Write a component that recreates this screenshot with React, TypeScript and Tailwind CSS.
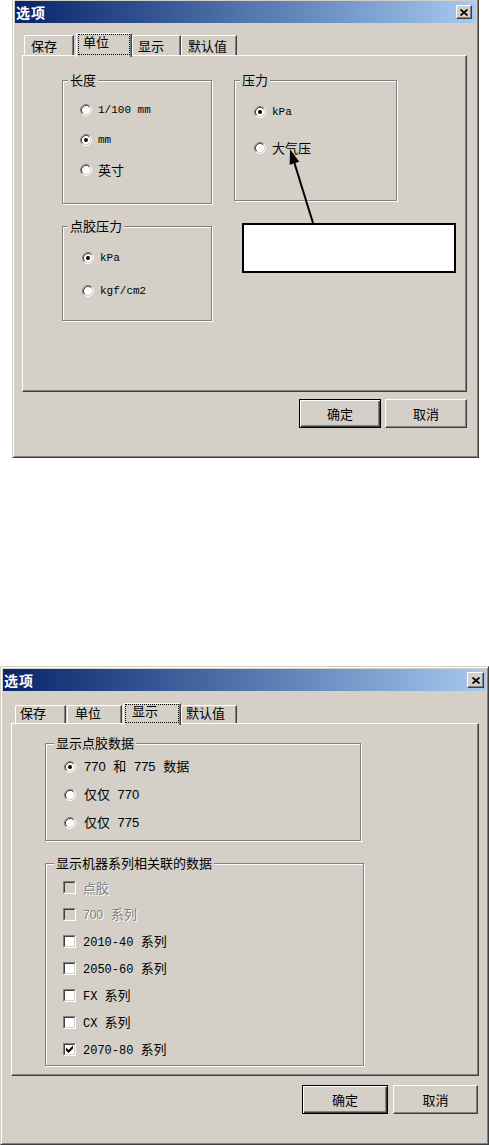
import type { FC, ReactNode } from 'react';

const face = 'bg-[#d4d0c8]';
const cjk = "font-['Noto_Sans_CJK_SC',sans-serif]";
const mono = "font-['Liberation_Mono','Noto_Sans_CJK_SC',monospace]";
const sans = "font-['Liberation_Sans','Noto_Sans_CJK_SC',sans-serif]";
const raised =
  'border border-t-white border-l-white border-r-[#404040] border-b-[#404040] shadow-[inset_-1px_-1px_0_#808080]';
const frame =
  'bg-[#d4d0c8] border border-t-[#d4d0c8] border-l-[#d4d0c8] border-r-[#404040] border-b-[#404040] shadow-[inset_1px_1px_0_#fff,inset_-1px_-1px_0_#808080] p-[2px]';
const greyed = 'text-[#808080] [text-shadow:1px_1px_0_#fff]';

const Radio: FC<{ on?: boolean }> = ({ on }) => (
  <svg width="12" height="12" viewBox="0 0 12 12" className="shrink-0">
    <circle cx="6" cy="6" r="4.5" fill="#fff" />
    <path d="M2.11 9.89A5.5 5.5 0 0 1 9.89 2.11" fill="none" stroke="#808080" />
    <path d="M9.89 2.11A5.5 5.5 0 0 1 2.11 9.89" fill="none" stroke="#fff" />
    <path d="M2.82 9.18A4.5 4.5 0 0 1 9.18 2.82" fill="none" stroke="#404040" />
    <path d="M9.18 2.82A4.5 4.5 0 0 1 2.82 9.18" fill="none" stroke="#d4d0c8" />
    {on && <circle cx="6" cy="6" r="2" fill="#000" />}
  </svg>
);

const Check: FC<{ on?: boolean; off?: boolean }> = ({ on, off }) => (
  <div className="w-[13px] h-[13px] shrink-0 border border-t-[#808080] border-l-[#808080] border-r-white border-b-white">
    <div
      className={`w-full h-full border border-t-[#404040] border-l-[#404040] border-r-[#d4d0c8] border-b-[#d4d0c8] ${
        off ? 'bg-[#d4d0c8]' : 'bg-white'
      }`}
    >
      {on && (
        <svg width="9" height="9" viewBox="0 0 9 9">
          <path d="M1 2.5 3.5 5 8 0.5 8 3.5 3.5 8 1 5.5Z" fill="#000" />
        </svg>
      )}
    </div>
  </div>
);

const Group: FC<{ label: string; cls: string; lbl: string; children: ReactNode }> = ({
  label,
  cls,
  lbl,
  children,
}) => (
  <div className={`relative shrink-0 border border-[#808080] shadow-[inset_1px_1px_0_#fff,1px_1px_0_#fff] ${cls}`}>
    <span className={`absolute -top-[9px] ${lbl} ${face} px-[2px] whitespace-nowrap`}>{label}</span>
    {children}
  </div>
);

const Tab: FC<{ label: string; cls: string; text: string; active?: boolean }> = ({ label, cls, text, active }) => (
  <div
    className={`relative shrink-0 border-t border-l border-r border-t-white border-l-white border-r-[#404040] rounded-tl-[2px] shadow-[inset_-1px_0_0_#808080] ${face} ${cls} ${
      active ? 'z-10 -mb-[2px]' : ''
    }`}
  >
    {active && <div className="absolute left-[1px] right-[1px] top-0 bottom-[2px] border border-dotted border-black" />}
    <div className={`whitespace-nowrap ${text}`}>{label}</div>
  </div>
);

const Btn: FC<{ label: string; cls: string; def?: boolean }> = ({ label, cls, def }) => (
  <div
    className={`flex items-center justify-center ${face} ${cls} ${
      def
        ? 'border border-black shadow-[inset_1px_1px_0_#fff,inset_-1px_-1px_0_#404040,inset_-2px_-2px_0_#808080]'
        : raised
    }`}
  >
    {label}
  </div>
);

const TitleBar: FC<{ close: string; pr: string }> = ({ close, pr }) => (
  <div className={`flex h-[22px] items-center justify-between bg-linear-to-r from-[#0a246a] to-[#a6caf0] pl-[1px] ${pr}`}>
    <span className="text-[14px] font-bold text-white leading-[16px] tracking-[1px]">选项</span>
    <div className={`flex items-center justify-center ${face} ${raised} ${close}`}>
      <svg width="8" height="7" viewBox="0 0 8 7">
        <path d="M0.5 0.5 7.5 6.5M7.5 0.5 0.5 6.5" stroke="#000" strokeWidth="1.7" />
      </svg>
    </div>
  </div>
);

const panel =
  'border border-t-white border-l-white border-r-[#404040] border-b-[#404040] shadow-[inset_-1px_-1px_0_#808080]';

export default function App() {
  return (
    <div className={`relative w-[489px] h-[1145px] overflow-hidden bg-white text-[13px] leading-[16px] text-black ${cjk}`}>
      {/* 单位 */}
      <div className={`ml-[12px] -mt-[2px] w-[467px] h-[460px] ${frame}`}>
        <TitleBar close="w-[16px] h-[14px]" pr="pr-[4px]" />
        <div className="ml-[7px] mt-[10px] flex h-[22px] items-end">
          <Tab label="保存" cls="ml-[2px] w-[50px] h-[20px]" text="pl-[6px] pt-[2px]" />
          <Tab label="单位" cls="ml-[2px] w-[56px] h-[24px]" text="pl-[6px]" active />
          <Tab label="显示" cls="w-[49px] h-[20px]" text="pl-[5px] pt-[2px]" />
          <Tab label="默认值" cls="w-[56px] h-[20px]" text="pl-[6px] pt-[2px]" />
        </div>
        <div className={`ml-[7px] w-[445px] h-[337px] ${panel}`}>
          <div className="flex gap-[22px] pl-[39px] pt-[24px]">
            <div className="flex flex-col gap-[22px]">
              <Group label="长度" cls="w-[150px] h-[124px] pl-[17px] pt-[14px]" lbl="left-[5px]">
                <div className="flex h-[30px] items-center gap-[6px]">
                  <Radio />
                  <span className={`${mono} text-[11px]`}>1/100 mm</span>
                </div>
                <div className="flex h-[30px] items-center gap-[6px]">
                  <Radio on />
                  <span className={`${mono} text-[11px]`}>mm</span>
                </div>
                <div className="flex h-[30px] items-center gap-[6px]">
                  <Radio />
                  <span>英寸</span>
                </div>
              </Group>
              <Group label="点胶压力" cls="w-[150px] h-[95px] pl-[19px] pt-[14px]" lbl="left-[5px]">
                <div className="flex h-[33px] items-center gap-[6px]">
                  <Radio on />
                  <span className={`${mono} text-[11px]`}>kPa</span>
                </div>
                <div className="flex h-[33px] items-center gap-[6px]">
                  <Radio />
                  <span className={`${mono} text-[11px]`}>kgf/cm2</span>
                </div>
              </Group>
            </div>
            <Group label="压力" cls="w-[163px] h-[121px] pl-[19px] pt-[13px]" lbl="left-[5px]">
              <div className="flex h-[36px] items-center gap-[6px]">
                <Radio on />
                <span className={`${mono} text-[11px]`}>kPa</span>
              </div>
              <div className="flex h-[36px] items-center gap-[6px]">
                <Radio />
                <span>大气压</span>
              </div>
            </Group>
          </div>
        </div>
        <div className="ml-[7px] mt-[7px] flex w-[445px] justify-end gap-[4px]">
          <Btn label="确定" cls="w-[82px] h-[29px]" def />
          <Btn label="取消" cls="w-[82px] h-[29px]" />
        </div>
      </div>

      {/* 显示 */}
      <div className={`mt-[208px] w-[489px] h-[479px] ${frame}`}>
        <TitleBar close="w-[17px] h-[16px]" pr="pr-[2px]" />
        <div className="ml-[8px] mt-[12px] flex h-[20px] items-end leading-[13px]">
          <Tab label="保存" cls="ml-[4px] w-[51px] h-[18px]" text="pl-[4px]" />
          <Tab label="单位" cls="ml-[1px] w-[55px] h-[18px]" text="pl-[7px]" />
          <Tab label="显示" cls="ml-[1px] w-[58px] h-[22px]" text="pl-[8px]" active />
          <Tab label="默认值" cls="w-[56px] h-[18px]" text="pl-[4px]" />
        </div>
        <div className={`ml-[8px] w-[468px] h-[353px] ${panel}`}>
          <div className="flex flex-col gap-[22px] pl-[33px] pt-[19px]">
            <Group label="显示点胶数据" cls="w-[316px] h-[98px] pl-[18px] pt-[9px]" lbl="left-[8px]">
              <div className="flex h-[28px] items-center gap-[8px]">
                <Radio on />
                <span className={`${sans} [word-spacing:4px]`}>770 和 775 数据</span>
              </div>
              <div className="flex h-[28px] items-center gap-[8px]">
                <Radio />
                <span className={`${sans} [word-spacing:4px]`}>仅仅 770</span>
              </div>
              <div className="flex h-[28px] items-center gap-[8px]">
                <Radio />
                <span className={`${sans} [word-spacing:4px]`}>仅仅 775</span>
              </div>
            </Group>
            <Group label="显示机器系列相关联的数据" cls="w-[319px] h-[203px] pl-[17px] pt-[10px]" lbl="left-[8px]">
              <div className="flex h-[27px] items-center gap-[7px]">
                <Check off />
                <span className={greyed}>点胶</span>
              </div>
              <div className="flex h-[27px] items-center gap-[7px]">
                <Check off />
                <span className={`${greyed} [word-spacing:5px]`}>
                  <span className={`${sans} text-[12px]`}>700</span> 系列
                </span>
              </div>
              {['2010-40', '2050-60', 'FX', 'CX'].map((s) => (
                <div key={s} className="flex h-[27px] items-center gap-[7px]">
                  <Check />
                  <span>
                    <span className={`${mono} text-[12px]`}>{s} </span>系列
                  </span>
                </div>
              ))}
              <div className="flex h-[27px] items-center gap-[7px]">
                <Check on />
                <span>
                  <span className={`${mono} text-[12px]`}>2070-80 </span>系列
                </span>
              </div>
            </Group>
          </div>
        </div>
        <div className="ml-[8px] mt-[9px] flex w-[467px] justify-end gap-[5px]">
          <Btn label="确定" cls="w-[86px] h-[29px]" def />
          <Btn label="取消" cls="w-[85px] h-[29px]" />
        </div>
      </div>

      {/* annotation */}
      <div className="absolute left-[242px] top-[223px] z-20 h-[50px] w-[214px] border-2 border-black bg-white" />
      <svg className="pointer-events-none absolute left-0 top-0 z-20" width="489" height="300">
        <line x1="313" y1="223" x2="294.5" y2="163.3" stroke="#000" strokeWidth="2" />
        <polygon points="290,149 299.2,161.8 289.7,164.8" fill="#000" />
      </svg>
    </div>
  );
}
